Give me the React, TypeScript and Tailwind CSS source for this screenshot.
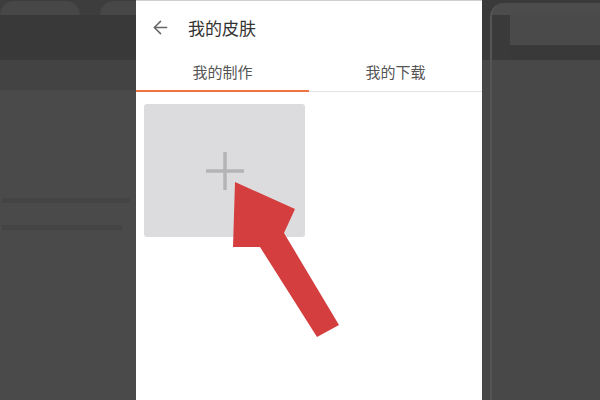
import { ArrowLeft } from "lucide-react";

export default function App() {
  return (
    <div
      className="relative w-[600px] h-[400px] overflow-hidden flex bg-[#4a4a4a]"
      style={{ fontFamily: '"Noto Sans CJK SC", "Noto Sans", sans-serif' }}
    >
      {/* blurred backdrop, left */}
      <div className="w-[136px] flex flex-col">
        <div className="h-[15px] flex items-end bg-[#3d3d3d] border-t border-[#3d3d3d]">
          <div className="w-[80px] h-[14px] rounded-t-[40px] bg-[#474747]" />
          <div className="w-[20px]" />
          <div className="flex-1 h-[14px] rounded-tl-[30px] bg-[#474747]" />
        </div>
        <div className="h-[45px] bg-[#393939]" />
        <div className="h-[30px] bg-[#434343]" />
        <div className="flex-1 bg-[#4a4a4a] flex flex-col pt-[108px] gap-[22px] pl-[2px]">
          <div className="h-[5px] w-[128px] bg-[#444444]" />
          <div className="h-[5px] w-[120px] bg-[#444444]" />
        </div>
      </div>

      {/* skin page */}
      <div className="w-[346px] bg-white flex flex-col border-t border-[#d0d0d0]">
        <div className="h-[53px] flex items-center pl-[14px]">
          <ArrowLeft size={21} strokeWidth={1.7} color="#666666" />
          <span className="ml-[17px] text-[17px] text-[#333333]">我的皮肤</span>
        </div>
        <div className="h-[38px] flex">
          <div className="flex-1 flex flex-col">
            <div className="flex-1 flex items-center justify-center text-[15px] text-[#555555]">
              我的制作
            </div>
            <div className="h-[2px] bg-[#ef7445]" />
          </div>
          <div className="flex-1 flex flex-col">
            <div className="flex-1 flex items-center justify-center text-[15px] text-[#555555]">
              我的下载
            </div>
            <div className="h-[2px] flex flex-col justify-end">
              <div className="h-[1px] bg-[#e2e2e2]" />
            </div>
          </div>
        </div>
        <div className="pt-[12px] pl-[8px]">
          <div className="w-[161px] h-[133px] rounded-[3px] bg-[#dcdcde] flex items-center justify-center">
            <svg width="40" height="40" viewBox="0 0 40 40">
              <path d="M20 1v38M1 20h38" stroke="#b4b4b7" strokeWidth="3.5" />
            </svg>
          </div>
        </div>
      </div>

      {/* blurred backdrop, right */}
      <div className="flex-1 flex flex-col bg-[#474747]">
        <div className="h-[60px] flex pt-[3px] bg-[#3a3a3a]">
          <div className="w-[8px] bg-[#3a3a3a]" />
          <div className="flex-1 flex flex-col rounded-tl-[14px] bg-[#4c4c4c] border-l-[2px] border-[#555555]">
            <div className="h-[12px]" />
            <div className="flex flex-1">
              <div className="w-[18px] bg-[#3a3a3a]" />
              <div className="flex-1 flex flex-col">
                <div className="h-[30px] bg-[#4a4a4a]" />
                <div className="flex-1 bg-[#393939]" />
              </div>
            </div>
          </div>
        </div>
        <div className="flex-1 border-l-[2px] border-[#555555] ml-[8px] bg-[#484848]" />
      </div>

      {/* red pointer annotation */}
      <svg className="absolute left-0 top-0" width="600" height="400" viewBox="0 0 600 400">
        <polygon
          points="235,182 295,209 284,233 339,325 317,337 260,247 233,247"
          fill="#d53e3e"
        />
      </svg>
    </div>
  );
}
